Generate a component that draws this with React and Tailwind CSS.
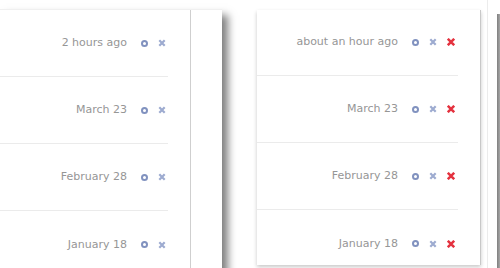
import React from 'react';

const leftItems = ['2 hours ago', 'March 23', 'February 28', 'January 18'];
const rightItems = ['about an hour ago', 'March 23', 'February 28', 'January 18'];

const Ring = () => (
  <span className="w-[8px] h-[8px] flex items-center justify-center">
    <span className="w-[7px] h-[7px] rounded-full border-2 border-[#8192bf]"></span>
  </span>
);

const Cross = ({ red }) => (
  <svg width="8" height="8" viewBox="0 0 8 8" className="block">
    <path
      d={red ? 'M0.8 0.8 L7.2 7.2 M7.2 0.8 L0.8 7.2' : 'M1.3 1.3 L6.7 6.7 M6.7 1.3 L1.3 6.7'}
      stroke={red ? '#e4323f' : '#9dabd0'}
      strokeWidth={red ? 2.5 : 2.2}
    />
  </svg>
);

const Row = ({ label, withDelete, last }) => (
  <div className={`h-[67px] flex items-center justify-end ${last ? '' : 'border-b border-[#ebebeb]'} ${withDelete ? 'pr-[3px]' : 'pr-[2px]'}`}>
    <span className="text-[11px] text-[#969696] mr-[13px] mt-[1px]">{label}</span>
    <div className="flex items-center gap-[10px]">
      <Ring />
      <Cross />
      {withDelete && <Cross red />}
    </div>
  </div>
);

export default function App() {
  return (
    <div className="w-[500px] h-[268px] overflow-hidden bg-white flex" style={{ fontFamily: '"DejaVu Sans", Tahoma, sans-serif' }}>
      {/* older stream panel */}
      <div className="w-[222px] shrink-0 mt-[9px] h-[300px] bg-white border-t border-[#f0f0f0] shadow-[6px_6px_8px_rgba(0,0,0,0.5)]">
        <div className="w-[191px] h-full border-r border-[#cfcfcf]">
          <div className="w-[168px]">
            {leftItems.map((item, i) => (
              <Row key={item} label={item} last={i === leftItems.length - 1} />
            ))}
          </div>
        </div>
      </div>

      {/* current panel */}
      <div className="ml-[35px] w-[224px] shrink-0 mt-[10px] h-[255px] bg-white border-r border-[#c8c8c8] shadow-[0_2px_4px_rgba(0,0,0,0.22)]">
        <div className="w-[201px] -mt-[1px]">
          {rightItems.map((item, i) => (
            <Row key={item} label={item} withDelete last={i === rightItems.length - 1} />
          ))}
        </div>
      </div>

      <div className="ml-[6px] w-[10px] shrink-0 border-l border-[#ececec]"></div>
      <div className="w-[4px] shrink-0 mt-[14px] bg-linear-to-r from-[#7f7f7f] to-[#b5b5b5]"></div>
    </div>
  );
}
